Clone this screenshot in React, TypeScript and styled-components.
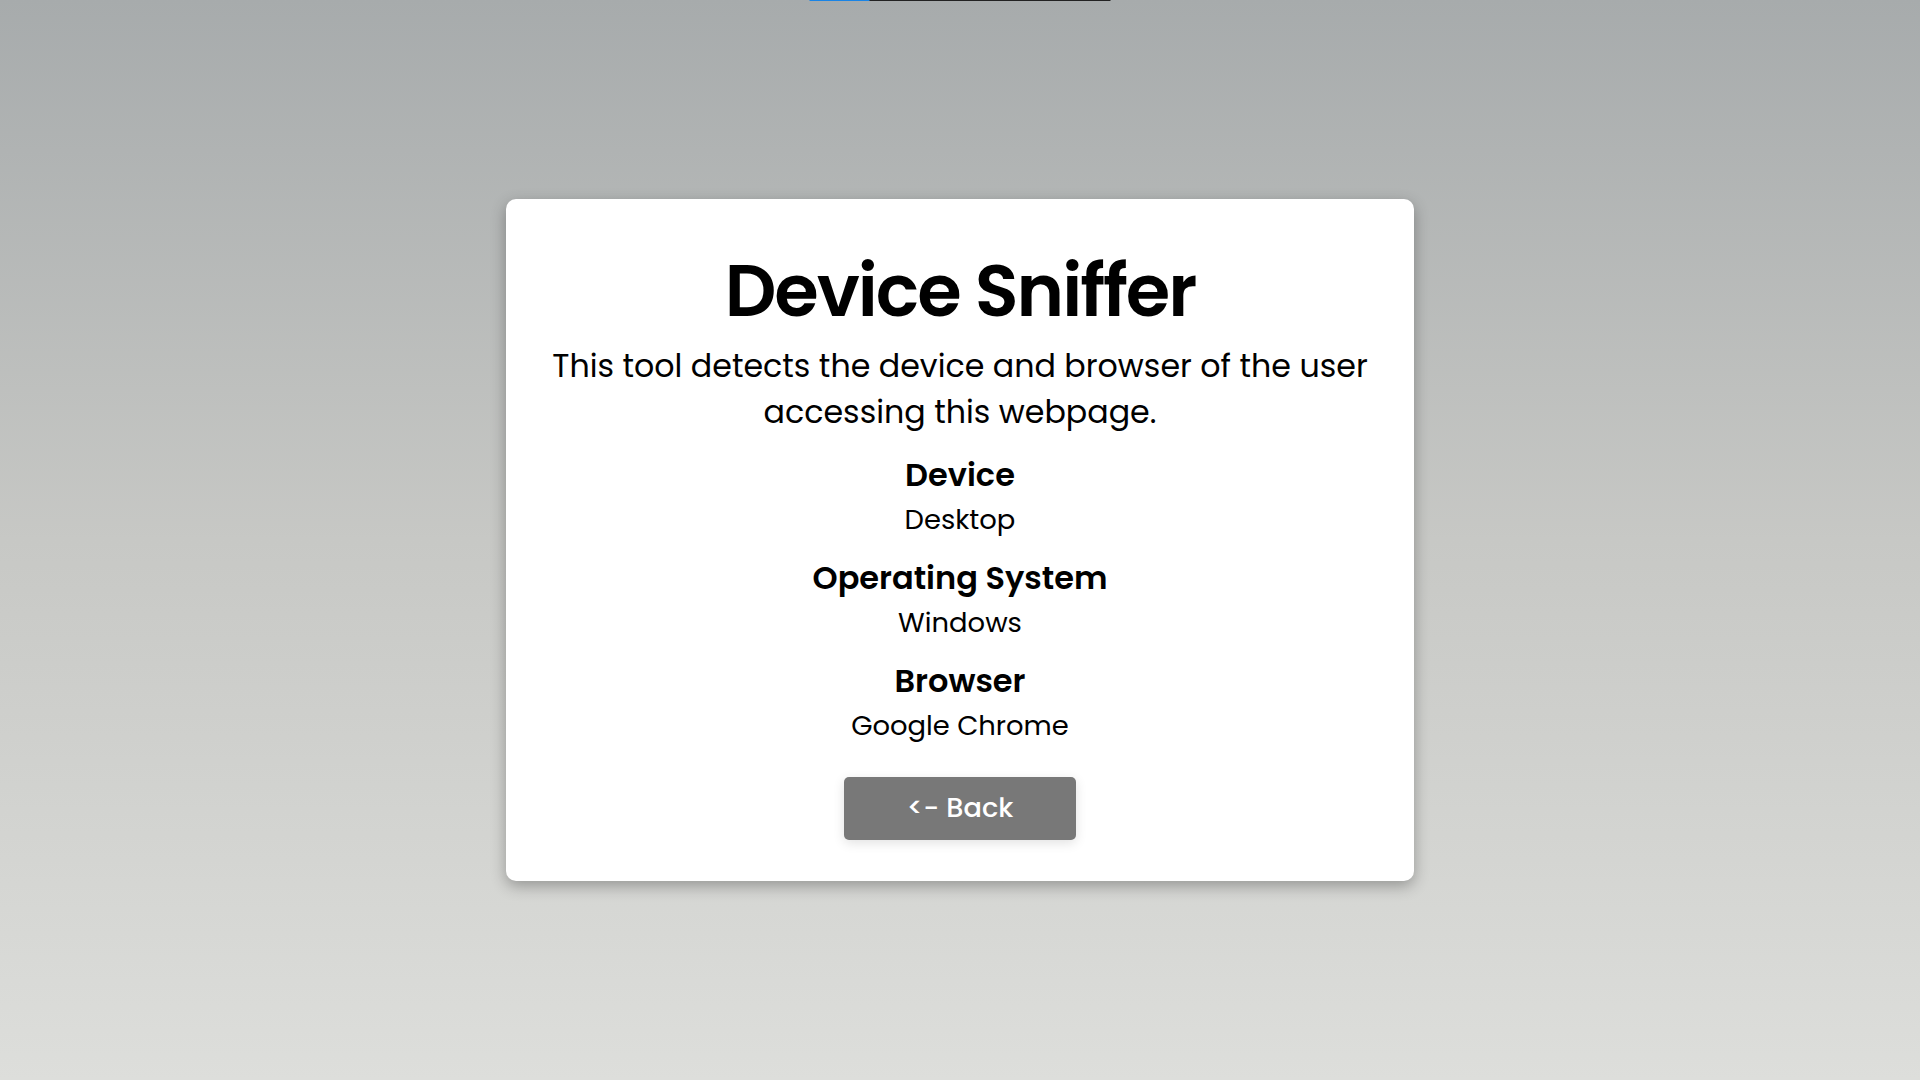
import React from "react";
import styled, { createGlobalStyle } from "styled-components";

const GlobalStyle = createGlobalStyle`
  html, body {
    margin: 0;
    padding: 0;
  }
  body {
    font-family: "Poppins", "Open Sans", "Noto Sans", sans-serif;
    color: #000;
  }
  * { box-sizing: border-box; }
`;

const Page = styled.main`
  min-height: 100vh;
  display: flex;
  align-items: center;
  justify-content: center;
  background: linear-gradient(180deg, #a7abac 0%, #c7c8c5 50%, #dddedb 100%);
`;

const Progress = styled.div`
  position: fixed;
  top: 0;
  left: 50%;
  transform: translateX(-50%);
  width: 301px;
  height: 1px;
  background: #222;
  display: flex;
`;

const ProgressFill = styled.div`
  height: 100%;
  background: #1a84e5;
`;

const Card = styled.section`
  width: 908px;
  background: #fff;
  border-radius: 10px;
  box-shadow: 0 5px 15px rgba(0, 0, 0, 0.3);
  padding: 42px 40px 41px;
  display: flex;
  flex-direction: column;
  align-items: center;
  text-align: center;
`;

const Title = styled.h1`
  margin: 0 0 1px;
  font-size: 72px;
  font-weight: 600;
  line-height: 1.4;
  letter-spacing: -2px;
`;

const Description = styled.p`
  margin: 0 0 18px;
  font-size: 31.7px;
  font-weight: 400;
  line-height: 46px;
`;

const InfoGroup = styled.div`
  display: flex;
  flex-direction: column;
  align-items: center;
  margin-bottom: 17px;

  &:last-of-type {
    margin-bottom: 31px;
  }
`;

const Label = styled.h3`
  margin: 0 0 3px;
  font-size: 32px;
  font-weight: 600;
  line-height: 1.4;
`;

const Value = styled.p`
  margin: 0;
  font-size: 27.4px;
  font-weight: 400;
  line-height: 1.4;
`;

const BackButton = styled.button`
  width: 232px;
  height: 63px;
  border: none;
  border-radius: 5px;
  background: #787878;
  color: #fff;
  font-family: inherit;
  font-size: 27.2px;
  font-weight: 500;
  box-shadow: 0 3px 12px rgba(0, 0, 0, 0.12);
  cursor: pointer;
`;

const info = [
  { label: "Device", value: "Desktop" },
  { label: "Operating System", value: "Windows" },
  { label: "Browser", value: "Google Chrome" },
];

export default function App() {
  return (
    <>
      <GlobalStyle />
      <Progress>
        <ProgressFill style={{ width: "20%" }} />
      </Progress>
      <Page>
        <Card>
          <Title>Device Sniffer</Title>
          <Description>
            This tool detects the device and browser of the user
            <br />
            accessing this webpage.
          </Description>
          {info.map((item) => (
            <InfoGroup key={item.label}>
              <Label>{item.label}</Label>
              <Value>{item.value}</Value>
            </InfoGroup>
          ))}
          <BackButton>&lt;- Back</BackButton>
        </Card>
      </Page>
    </>
  );
}
